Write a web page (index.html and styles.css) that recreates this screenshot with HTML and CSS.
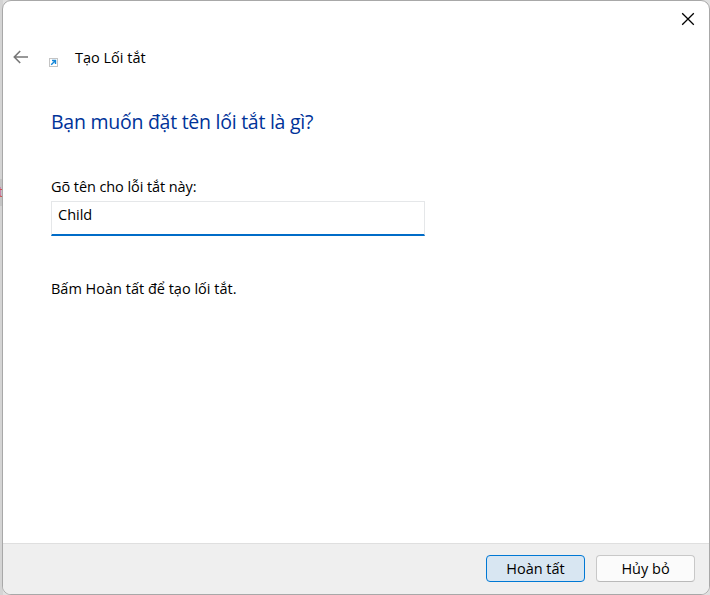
FILE: index.html
```html
<!DOCTYPE html>
<html lang="vi">
<head>
<meta charset="utf-8">
<title>Tạo Lối tắt</title>
<link rel="stylesheet" href="styles.css">
</head>
<body>
<span class="behind">t</span>
<main class="wizard">
  <div class="titlebar">
    <svg class="close" width="14" height="14" viewBox="0 0 14 14"><path d="M1.2 1.2 12.8 12.8M12.8 1.2 1.2 12.8"/></svg>
  </div>
  <header class="header">
    <svg class="back" width="16" height="14" viewBox="0 0 16 14"><path d="M15 7H1.5M7.2 1 1.3 7l5.9 6"/></svg>
    <svg class="shortcut" width="9" height="9" viewBox="0 0 9 9"><rect x=".5" y=".5" width="8" height="8"/><path d="M2.2 6.8 6.3 2.7M3 2.5h3.5v3.5"/></svg>
    <span class="title">Tạo Lối tắt</span>
  </header>
  <section class="content">
    <h1 class="question">Bạn muốn đặt tên lối tắt là gì?</h1>
    <div class="label">Gõ tên cho lỗi tắt này:</div>
    <div class="field"><span class="value">Child</span></div>
    <p class="hint">Bấm Hoàn tất để tạo lối tắt.</p>
  </section>
  <footer class="footer">
    <button class="button primary">Hoàn tất</button>
    <button class="button">Hủy bỏ</button>
  </footer>
</main>
</body>
</html>
```
FILE: styles.css
```css
* { box-sizing: border-box; }
body {
  margin: 0;
  height: 595px;
  padding-left: 2px;
  overflow: hidden;
  position: relative;
  background: linear-gradient(90deg, #d4d4d4 0 3px, #e0e0e0 3px);
  font: 14.5px/20px "Open Sans", "Noto Sans", sans-serif;
  color: #000;
}
.behind {
  position: absolute;
  left: 0;
  top: 179px;
  width: 3px;
  height: 27px;
  overflow: hidden;
  background: #c4c4c4;
  color: #cc5555;
  line-height: 26px;
  text-indent: -2px;
}
.wizard {
  position: relative;
  height: 595px;
  display: flex;
  flex-direction: column;
  background: #fff;
  border: 1px solid #a8a8a8;
  border-radius: 9px;
  overflow: hidden;
}
.titlebar {
  height: 37px;
  display: flex;
  justify-content: flex-end;
  padding: 11px 14px 0 0;
}
svg { display: block; fill: none; }
.close { stroke: #000; stroke-width: 1.3; }
.header {
  height: 40px;
  display: flex;
  align-items: center;
  padding-left: 10px;
}
.back { stroke: #777; stroke-width: 1.6; margin-top: -2px; }
.shortcut { margin: 8px 0 0 20px; }
.shortcut rect { fill: #fff; stroke: #c4c4c4; }
.shortcut path { stroke: #1486d8; stroke-width: 1.4; }
.title { margin-left: 17px; }
.content { flex: 1; padding: 30px 48px 0; }
.question {
  margin: 0 0 41px;
  font-size: 19.5px;
  line-height: 28px;
  font-weight: 400;
  letter-spacing: -0.26px;
  color: #003399;
}
.label { height: 24px; letter-spacing: -0.08px; }
.field {
  width: 374px;
  height: 35px;
  padding: 3px 6px;
  border: 1px solid #e5e7e9;
  border-bottom: 2px solid #006cc8;
}
.hint { margin: 43px 0 0; }
.footer {
  height: 51px;
  flex: none;
  display: flex;
  justify-content: flex-end;
  gap: 11px;
  padding: 11px 14px 0 0;
  border-top: 1px solid #dfdfdf;
  background: #efefef;
}
.button {
  width: 99px;
  height: 27px;
  padding: 0;
  border: 1px solid #c8c8c8;
  border-bottom-color: #b9b9b9;
  border-radius: 4px;
  background: #fbfbfb;
  font: inherit;
  color: #000;
}
.primary { border-color: #0078d4; background: #d8e6f2; }
```
